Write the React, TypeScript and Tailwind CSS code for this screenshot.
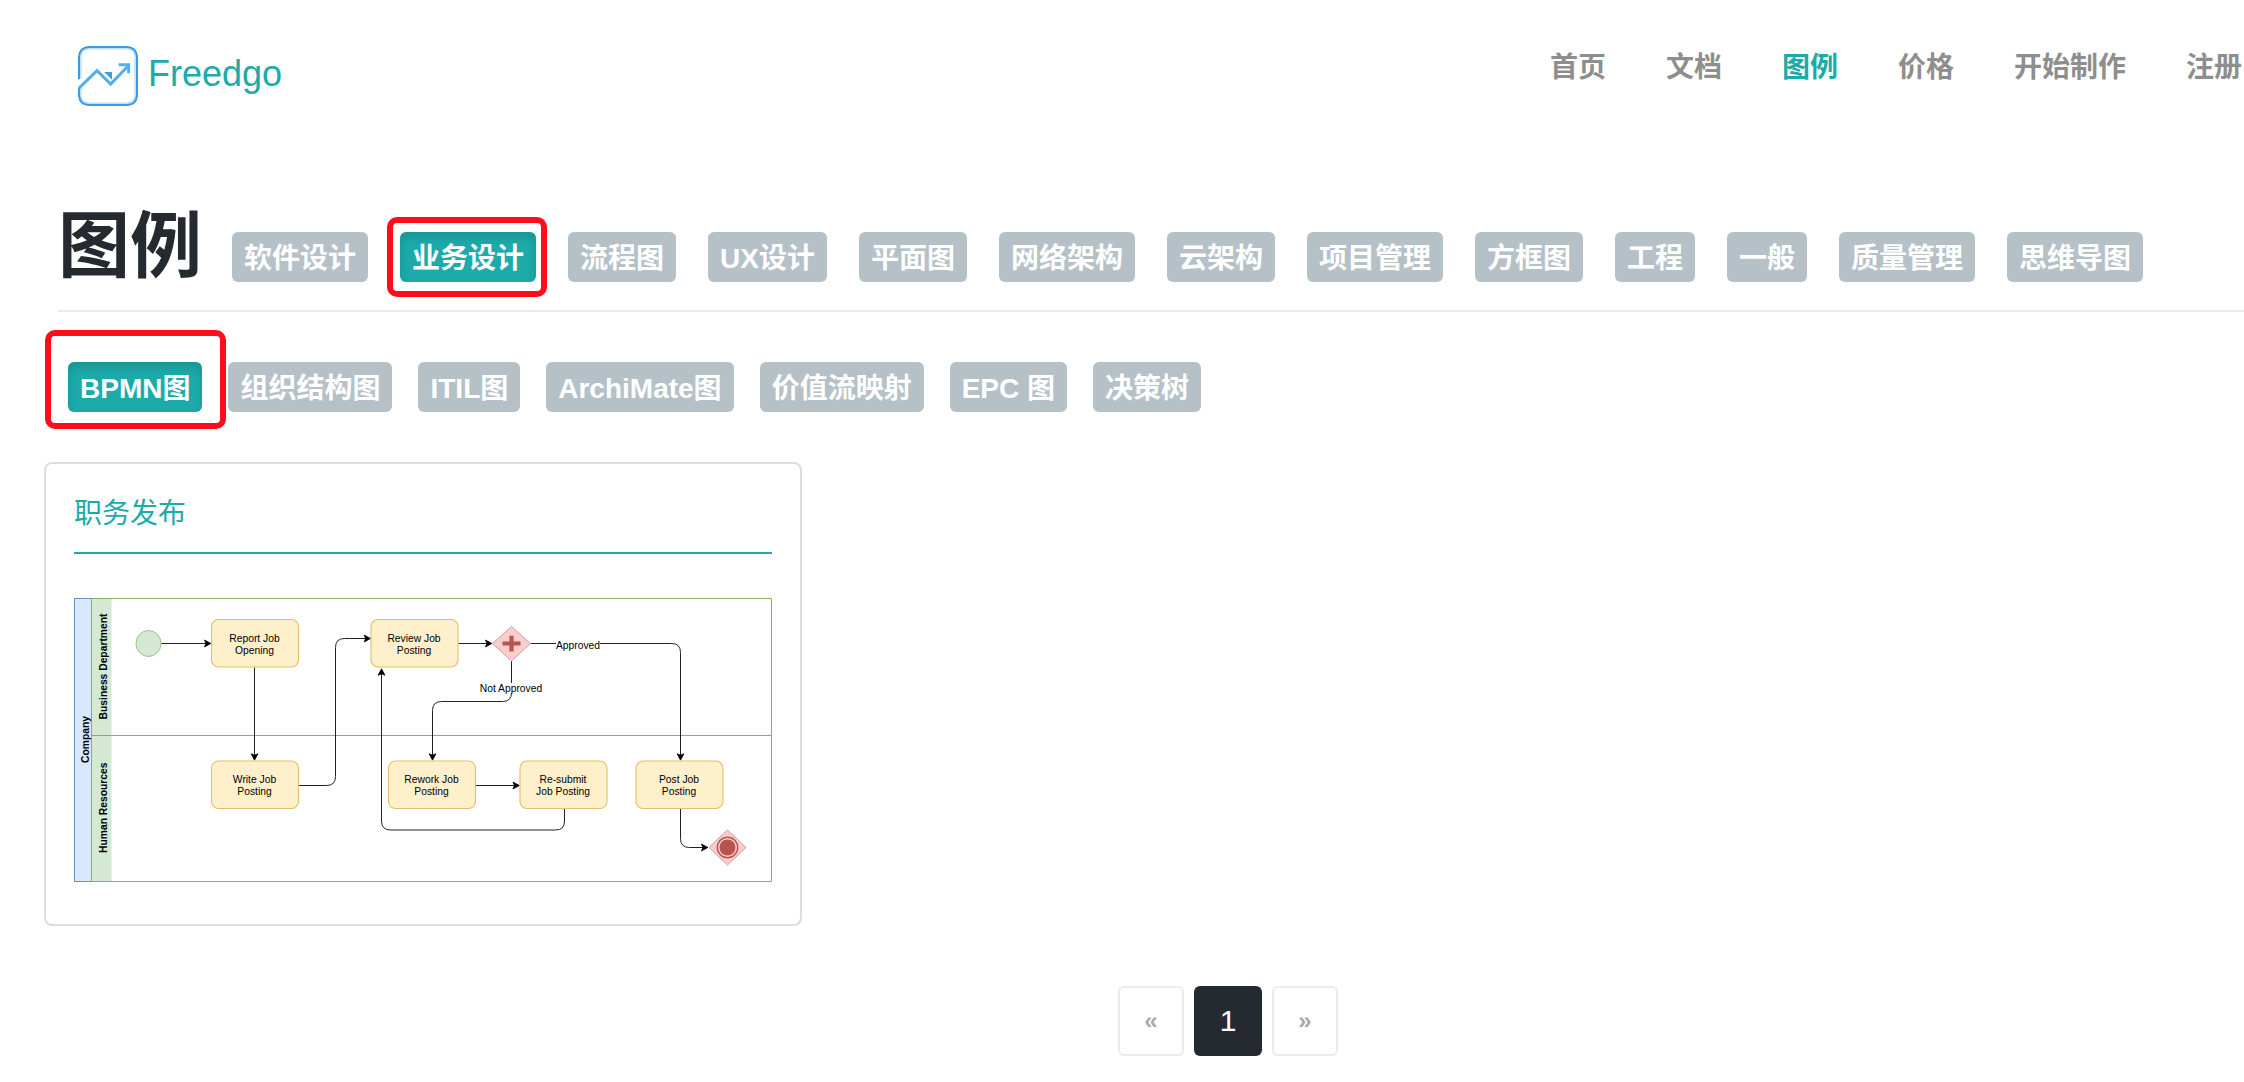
import React from "react";

const FONT = "font-['Liberation_Sans','Noto_Sans_CJK_SC',sans-serif]";

const navItems = ["首页", "文档", "图例", "价格", "开始制作", "注册"];

const categories = [
  "软件设计",
  "业务设计",
  "流程图",
  "UX设计",
  "平面图",
  "网络架构",
  "云架构",
  "项目管理",
  "方框图",
  "工程",
  "一般",
  "质量管理",
  "思维导图",
];

const subCategories = ["BPMN图", "组织结构图", "ITIL图", "ArchiMate图", "价值流映射", "EPC 图", "决策树"];

function Logo() {
  return (
    <svg viewBox="0 0 180 180" className="size-15 shrink-0" fill="none" aria-hidden="true">
      <path
        d="M6 98V32Q8 8 32 6H148Q172 8 174 32V148Q172 172 148 174H32Q8 172 6 148V124"
        stroke="#c9e4f7"
        strokeWidth="11"
      />
      <path
        d="M3 100V32Q5 5 32 3H148Q175 5 177 32V148Q175 175 148 177H32Q5 175 3 148V124"
        stroke="#3a9be0"
        strokeWidth="6"
      />
      <g stroke="#55aee6" strokeWidth="9">
        <path d="M2 127L57 74L98 114L150 60" />
        <path d="M122 56H152V82" />
      </g>
      <path d="M78 78H102V101Z" fill="#3a9fe0" />
    </svg>
  );
}

function Pill({ label, active, marker }: { label: string; active: boolean; marker: string }) {
  return (
    <li className="relative shrink-0">
      <a
        href="#"
        aria-current={active ? "true" : undefined}
        className={
          active
            ? "block rounded-md bg-[#1caaaa] px-3 pt-[7px] pb-[3px] text-[28px] leading-10 font-bold whitespace-nowrap text-white shadow-[inset_0_6px_10px_rgba(0,0,0,0.125)]"
            : "block rounded-md bg-[#b6c1c7] px-3 pt-[7px] pb-[3px] text-[28px] leading-10 font-bold whitespace-nowrap text-white"
        }
      >
        {label}
      </a>
      {active && <span className={marker} />}
    </li>
  );
}

type Direction = "right" | "down" | "up";

function Arrow({ x, y, dir }: { x: number; y: number; dir: Direction }) {
  const angle = { right: 0, down: 90, up: -90 }[dir];
  return (
    <path
      d="M-6 0L-70 34L-56 0L-70 -34Z"
      fill="#000"
      stroke="#000"
      strokeWidth="8"
      transform={`translate(${x} ${y}) rotate(${angle})`}
    />
  );
}

const tasks = [
  { x: 1375, y: 215, lines: ["Report Job", "Opening"] },
  { x: 2970, y: 215, lines: ["Review Job", "Posting"] },
  { x: 1375, y: 1630, lines: ["Write Job", "Posting"] },
  { x: 3145, y: 1630, lines: ["Rework Job", "Posting"] },
  { x: 4460, y: 1630, lines: ["Re-submit", "Job Posting"] },
  { x: 5620, y: 1630, lines: ["Post Job", "Posting"] },
];

function JobPostingDiagram() {
  return (
    <svg
      viewBox="0 0 6980 2840"
      className="block w-full font-['Liberation_Sans',sans-serif]"
      fontSize="103"
      textAnchor="middle"
      role="img"
      aria-label="职务发布"
    >
      {/* pool and lanes */}
      <rect x="5" y="5" width="170" height="2830" fill="#dae8fc" stroke="#6c8ebf" strokeWidth="10" />
      <rect x="175" y="5" width="200" height="2830" fill="#d5e8d4" />
      <path d="M175 5H6975V2835H175ZM175 1375H6975" fill="none" stroke="#82b366" strokeWidth="10" />
      <g fontWeight="700">
        <text transform="translate(147 1415) rotate(-90)">Company</text>
        <text transform="translate(327 685) rotate(-90)">Business Department</text>
        <text transform="translate(327 2097) rotate(-90)">Human Resources</text>
      </g>

      {/* connectors */}
      <g fill="none" stroke="#222" strokeWidth="10">
        <path d="M870 455H1320" />
        <path d="M1805 695V1570" />
        <path d="M2245 1875H2525Q2615 1875 2615 1785V495Q2615 405 2705 405H2920" />
        <path d="M3845 455H4130" />
        <path d="M4565 455H5975Q6065 455 6065 545V1570" />
        <path d="M4375 630V945Q4375 1035 4285 1035H3675Q3585 1035 3585 1125V1570" />
        <path d="M4020 1875H4400" />
        <path d="M4905 2110V2230Q4905 2320 4815 2320H3165Q3075 2320 3075 2230V760" />
        <path d="M6065 2110V2405Q6065 2495 6155 2495H6290" />
      </g>
      <Arrow x={1375} y={455} dir="right" />
      <Arrow x={1805} y={1628} dir="down" />
      <Arrow x={2972} y={405} dir="right" />
      <Arrow x={4185} y={455} dir="right" />
      <Arrow x={6065} y={1628} dir="down" />
      <Arrow x={3585} y={1628} dir="down" />
      <Arrow x={4460} y={1875} dir="right" />
      <Arrow x={3075} y={702} dir="up" />
      <Arrow x={6345} y={2495} dir="right" />

      {/* start event */}
      <ellipse cx="745" cy="455" rx="125" ry="130" fill="#d5e8d4" stroke="#97c688" strokeWidth="10" />

      {tasks.map((t) => (
        <g key={t.x + "-" + t.y}>
          <rect x={t.x} y={t.y} width="870" height="475" rx="70" fill="#fff0cc" stroke="#dec06c" strokeWidth="11" />
          <text x={t.x + 430} y={t.y + 222}>
            {t.lines[0]}
          </text>
          <text x={t.x + 430} y={t.y + 342}>
            {t.lines[1]}
          </text>
        </g>
      ))}

      {/* gateway and end event */}
      <g fill="#f8cecc" stroke="#d08885" strokeWidth="8">
        <path d="M4375 285L4565 455L4375 630L4185 455Z" />
        <path d="M6535 2320L6720 2495L6535 2670L6350 2495Z" />
      </g>
      <path d="M4285 455H4465M4375 378V535" stroke="#b85450" strokeWidth="42" />
      <circle cx="6535" cy="2495" r="102" fill="none" stroke="#b85450" strokeWidth="14" />
      <circle cx="6535" cy="2495" r="80" fill="#b85450" />

      {/* connector labels */}
      <rect x="4820" y="400" width="440" height="120" fill="#fff" />
      <text x="5040" y="505">
        Approved
      </text>
      <rect x="4060" y="850" width="630" height="100" fill="#fff" />
      <text x="4370" y="942">
        Not Approved
      </text>
    </svg>
  );
}

export default function App() {
  return (
    <div className={`${FONT} overflow-x-hidden bg-white pb-6 text-[#252a31]`}>
      <header className="flex items-start justify-between pt-[46px] pr-0.5 pl-[78px]">
        <a href="#" className="flex items-start gap-2.5 text-4xl leading-14 text-[#1caaaa]">
          <Logo />
          <span className="leading-14">Freedgo</span>
        </a>
        <nav className="pt-0.5">
          <ul className="flex gap-15 text-[28px] leading-10 font-bold">
            {navItems.map((item) => (
              <li key={item} className="shrink-0 whitespace-nowrap">
                <a href="#" className={item === "图例" ? "text-[#1caaaa]" : "text-[#8e8e8e]"}>
                  {item}
                </a>
              </li>
            ))}
          </ul>
        </nav>
      </header>

      <main>
        <div className="mt-24 ml-[58px] flex items-start gap-[30px] border-b-2 border-[#ebebeb] pb-5">
          <h1 className="shrink-0 text-7xl leading-[88px] font-bold">图例</h1>
          <ul className="flex gap-8 pt-[30px]">
            {categories.map((c) => (
              <Pill
                key={c}
                label={c}
                active={c === "业务设计"}
                marker="pointer-events-none absolute -inset-y-[15px] -right-[11px] -left-[13px] rounded-[10px] border-6 border-[#ff0d1b]"
              />
            ))}
          </ul>
        </div>

        <ul className="mt-[50px] ml-[68px] flex gap-[26px]">
          {subCategories.map((c) => (
            <Pill
              key={c}
              label={c}
              active={c === "BPMN图"}
              marker="pointer-events-none absolute -top-8 -right-6 -bottom-[17px] -left-[23px] rounded-[10px] border-6 border-[#ff0d1b]"
            />
          ))}
        </ul>

        <section className="mt-[50px] ml-11 max-w-[758px] rounded-lg border-2 border-[#dddddd] px-7 pt-[30px] pb-[42px]">
          <h2 className="border-b-2 border-[#1caaaa] pb-[18px] text-[28px] leading-10 text-[#1caaaa]">
            <a href="#">职务发布</a>
          </h2>
          <a href="#" className="mt-11 block">
            <JobPostingDiagram />
          </a>
        </section>

        <nav aria-label="分页" className="mt-15 flex justify-center gap-2.5 pl-[212px]">
          <button
            type="button"
            aria-label="上一页"
            className="h-[70px] w-[66px] rounded-md border-2 border-[#ebebeb] text-2xl font-bold text-[#aaaaaa]"
          >
            «
          </button>
          <button type="button" aria-current="page" className="h-[70px] w-[68px] rounded-md bg-[#252a31] text-3xl text-white">
            1
          </button>
          <button
            type="button"
            aria-label="下一页"
            className="h-[70px] w-[66px] rounded-md border-2 border-[#ebebeb] text-2xl font-bold text-[#aaaaaa]"
          >
            »
          </button>
        </nav>
      </main>
    </div>
  );
}
